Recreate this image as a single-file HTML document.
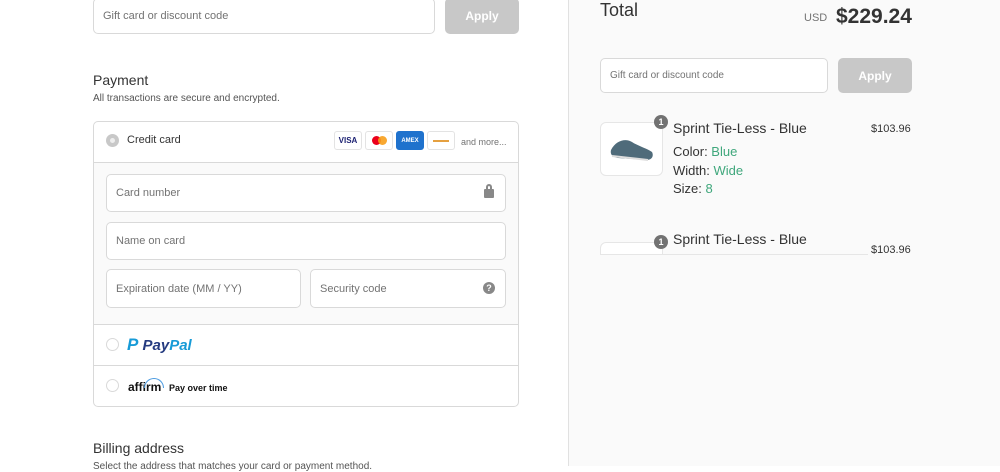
<!DOCTYPE html>
<html><head><style>
*{box-sizing:border-box;margin:0;padding:0}
body{width:1000px;height:466px;overflow:hidden;background:#fff;font-family:"Liberation Sans",sans-serif;color:#333;position:relative}
.a{position:absolute}
.inp{position:absolute;border:1px solid #d9d9d9;border-radius:5px;background:#fff;font-size:11px;color:#737373;padding-left:9px;display:flex;align-items:center}
.btn{position:absolute;background:#c8c8c8;border-radius:5px;color:#fff;font-weight:bold;font-size:12px;display:flex;align-items:center;justify-content:center}
.radio{position:absolute;width:13px;height:13px;border:1px solid #d9d9d9;border-radius:50%;background:#fff}
.card{position:absolute;top:131px;height:19px;width:28px;border:1px solid #e3e3e3;border-radius:3px;background:#fff;font-size:8px;font-weight:bold;display:flex;align-items:center;justify-content:center}
.g{color:#3fa77c}
</style></head><body>
<div class="a" style="left:568px;top:0;width:432px;height:466px;background:#fafafa;border-left:1px solid #e1e1e1"></div>

<div class="inp" style="left:93px;top:-2px;width:342px;height:36px">Gift card or discount code</div>
<div class="btn" style="left:445px;top:-2px;width:74px;height:36px">Apply</div>

<div class="a" style="left:93px;top:72px;font-size:14px">Payment</div>
<div class="a" style="left:93px;top:93px;font-size:10px;color:#545454">All transactions are secure and encrypted.</div>

<div class="a" style="left:93px;top:121px;width:426px;height:286px;border:1px solid #d9d9d9;border-radius:5px;overflow:hidden">
 <div class="a" style="left:0;top:40px;width:424px;height:163px;background:#fafafa;border-top:1px solid #d9d9d9;border-bottom:1px solid #d9d9d9"></div>
 <div class="a" style="left:0;top:243px;width:424px;border-top:1px solid #d9d9d9"></div>
</div>
<div class="a" style="left:106px;top:134px;width:13px;height:13px;border-radius:50%;background:#c8c8c8"><div class="a" style="left:4px;top:4px;width:5px;height:5px;border-radius:50%;background:#eee"></div></div>
<div class="a" style="left:127px;top:134px;font-size:11px;color:#333">Credit card</div>
<div class="card" style="left:334px;color:#1a1f71">VISA</div>
<div class="card" style="left:365px"><span style="width:9px;height:9px;border-radius:50%;background:#eb001b;display:inline-block"></span><span style="width:9px;height:9px;border-radius:50%;background:#f79e1b;display:inline-block;margin-left:-3px;opacity:.9"></span></div>
<div class="card" style="left:396px;background:#1f72cd;border-color:#1f72cd;color:#fff;font-size:6px">AMEX</div>
<div class="card" style="left:427px"><span style="width:16px;height:2px;background:#e5a040;display:block"></span></div>
<div class="a" style="left:461px;top:137px;font-size:9px;color:#737373">and more...</div>

<div class="inp" style="left:106px;top:174px;width:400px;height:38px">Card number</div>
<div class="a" style="left:484px;top:189px;width:10px;height:9px;background:#888;border-radius:1px"></div>
<div class="a" style="left:486px;top:184px;width:6px;height:7px;border:2px solid #888;border-bottom:none;border-radius:3px 3px 0 0"></div>
<div class="inp" style="left:106px;top:222px;width:400px;height:38px">Name on card</div>
<div class="inp" style="left:106px;top:269px;width:195px;height:39px">Expiration date (MM / YY)</div>
<div class="inp" style="left:310px;top:269px;width:196px;height:39px">Security code</div>
<div class="a" style="left:483px;top:282px;width:12px;height:12px;border-radius:50%;background:#888;color:#fff;font-size:9px;font-weight:bold;text-align:center;line-height:12px">?</div>

<div class="radio" style="left:106px;top:338px"></div>
<div class="a" style="left:127px;top:335px;font-size:15px;font-weight:bold;font-style:italic;color:#253b80"><span style="color:#179bd7;font-size:17px">P</span> Pay<span style="color:#179bd7">Pal</span></div>
<div class="radio" style="left:106px;top:379px"></div>
<div class="a" style="left:128px;top:380px;font-size:12px;font-weight:bold;color:#111">affirm</div>
<div class="a" style="left:144px;top:378px;width:20px;height:10px;border:1.5px solid #4a9ae0;border-bottom:none;border-radius:10px 10px 0 0"></div>
<div class="a" style="left:169px;top:383px;font-size:9px;font-weight:bold;color:#111">Pay over time</div>

<div class="a" style="left:93px;top:440px;font-size:14px">Billing address</div>
<div class="a" style="left:93px;top:461px;font-size:10px;color:#545454">Select the address that matches your card or payment method.</div>

<div class="a" style="left:600px;top:0px;font-size:18px;color:#333">Total</div>
<div class="a" style="left:804px;top:12px;font-size:11px;color:#737373">USD</div>
<div class="a" style="left:836px;top:5px;font-size:21px;font-weight:bold;color:#333">$229.24</div>
<div class="inp" style="left:600px;top:58px;width:228px;height:35px;font-size:10px">Gift card or discount code</div>
<div class="btn" style="left:838px;top:58px;width:74px;height:35px">Apply</div>

<div class="a" style="left:600px;top:122px;width:63px;height:54px;border:1px solid #e6e6e6;border-radius:6px;background:#fff"></div>
<svg class="a" style="left:608px;top:132px" width="48" height="32"><path d="M3 18 C8 8 18 6 24 10 C30 14 38 16 44 20 C46 24 44 28 38 28 L10 26 C4 25 2 22 3 18Z" fill="#4f6b7a"/><path d="M4 24 L40 28" stroke="#ddd" stroke-width="2"/></svg>
<div class="a" style="left:654px;top:115px;width:14px;height:14px;border-radius:50%;background:#727272;color:#fff;font-size:9px;font-weight:bold;text-align:center;line-height:14px">1</div>
<div class="a" style="left:673px;top:120px;font-size:14px;color:#333">Sprint Tie-Less - Blue</div>
<div class="a" style="left:871px;top:123px;font-size:11px;color:#333">$103.96</div>
<div class="a" style="left:673px;top:143px;font-size:13px;line-height:18.5px;color:#333">Color: <span class="g">Blue</span><br>Width: <span class="g">Wide</span><br>Size: <span class="g">8</span></div>

<div class="a" style="left:600px;top:242px;width:63px;height:13px;border:1px solid #e6e6e6;border-bottom:none;border-radius:6px 6px 0 0;background:#fff"></div>
<div class="a" style="left:600px;top:254px;width:268px;border-top:1px solid #e6e6e6"></div>
<div class="a" style="left:654px;top:235px;width:14px;height:14px;border-radius:50%;background:#727272;color:#fff;font-size:9px;font-weight:bold;text-align:center;line-height:14px">1</div>
<div class="a" style="left:673px;top:231px;font-size:14px;color:#333">Sprint Tie-Less - Blue</div>
<div class="a" style="left:871px;top:244px;font-size:11px;color:#333">$103.96</div>
</body></html>
